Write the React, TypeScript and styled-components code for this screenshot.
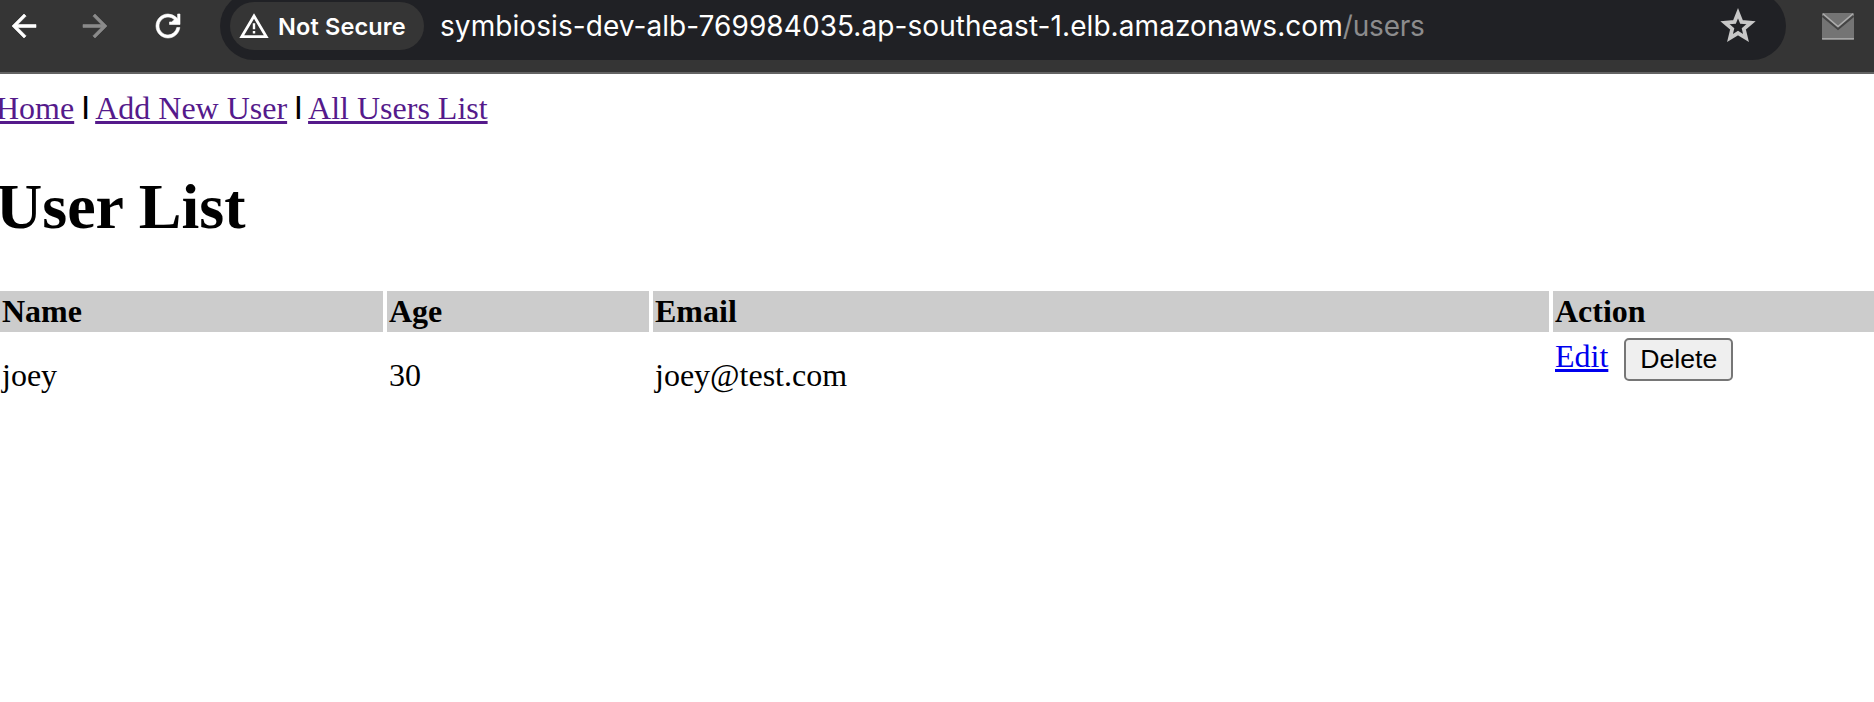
import React from 'react';
import styled, { createGlobalStyle } from 'styled-components';

const GlobalStyle = createGlobalStyle`
  body {
    margin: 0;
    background: #fff;
    color: #000;
    font-family: "Liberation Serif", "Times New Roman", serif;
    font-size: 32px;
    line-height: 37px;
    overflow: hidden;
  }
`;

const Toolbar = styled.header`
  display: flex;
  box-sizing: border-box;
  height: 74px;
  padding-left: 6px;
  background: #353535;
  border-bottom: 2px solid #636363;
  overflow: hidden;
`;

const IconSlot = styled.span<{ $color: string; $width: number }>`
  flex: none;
  width: ${(p) => p.$width}px;
  height: 52px;
  display: flex;
  align-items: center;
  color: ${(p) => p.$color};
`;

const AddressBar = styled.div`
  flex: none;
  box-sizing: border-box;
  display: flex;
  align-items: center;
  width: 1566px;
  height: 68px;
  margin-top: -8px;
  padding: 0 30px 0 10px;
  border-radius: 34px;
  background: #202125;
  font-family: Inter, "Liberation Sans", sans-serif;
`;

const SecurityChip = styled.div`
  box-sizing: border-box;
  display: flex;
  align-items: center;
  width: 194px;
  height: 48px;
  padding-left: 9px;
  gap: 9px;
  border-radius: 24px;
  background: #353535;
  color: #fff;
  font-size: 23.5px;
  font-weight: 560;
  letter-spacing: 0.15px;
  white-space: nowrap;
`;

const Url = styled.div`
  flex: 1;
  margin-left: 16px;
  color: #fff;
  font-size: 28px;
  font-weight: 430;
  letter-spacing: 0.07px;
  white-space: nowrap;
`;

const UrlPath = styled.span`
  color: #8c8c8d;
  letter-spacing: -0.2px;
`;

const MailSlot = styled.span`
  display: flex;
  align-items: center;
  height: 53px;
  margin-left: 36px;
`;

const Page = styled.main`
  margin-left: -4px;
  padding-top: 16px;
`;

const Nav = styled.nav`
  height: 37px;
`;

const Link = styled.a<{ $visited?: boolean }>`
  color: ${(p) => (p.$visited ? '#551a8b' : '#0000ee')};
  text-decoration: underline;
  text-decoration-thickness: 3px;
  text-underline-offset: 2px;
  text-decoration-skip-ink: none;
`;

const Divider = styled.span`
  font: bold 24px/1 "Liberation Sans", Arial, sans-serif;
  vertical-align: 5px;
`;

const Title = styled.h1`
  margin: 43px 0;
  font-size: 64px;
  line-height: 74px;
`;

const Table = styled.table`
  width: 1882px;
  table-layout: fixed;
  border-collapse: separate;
  border-spacing: 4px;
`;

const HeadCell = styled.th<{ $width?: number }>`
  box-sizing: border-box;
  width: ${(p) => (p.$width ? `${p.$width}px` : 'auto')};
  padding: 2px;
  background: #ccc;
  text-align: left;
`;

const Cell = styled.td`
  padding: 2px;
`;

const ActionForm = styled.form`
  display: flex;
  align-items: flex-start;
  gap: 16px;
  margin: 0 0 32px;
`;

const DeleteButton = styled.button`
  box-sizing: border-box;
  width: 109px;
  height: 43px;
  padding: 0;
  border: 2px solid #767676;
  border-radius: 5px;
  background: #efefef;
  color: #000;
  font: 26.67px/37px "Liberation Sans", Arial, sans-serif;
`;

const users = [{ name: 'joey', age: 30, email: 'joey@test.com' }];

const ToolbarIcon = ({ d }: { d: string }) => (
  <svg width="36" height="36" viewBox="0 0 24 24" fill="currentColor" stroke="currentColor" strokeWidth="0.4">
    <path d={d} />
  </svg>
);

const StarIcon = () => (
  <svg width="36" height="36" viewBox="0 0 36 36" fill="none" overflow="visible">
    <path
      d="M18 5.2 21.5 13.9 31 14.7 23.8 20.9 26 30 18 25.1 10 30 12.2 20.9 5 14.7 14.5 13.9Z"
      stroke="currentColor"
      strokeWidth="3.8"
    />
  </svg>
);

const WarningIcon = () => (
  <svg width="30" height="26" viewBox="0 0 30 26" fill="none">
    <path d="M15 3 27.2 23.6H2.8Z" stroke="#fff" strokeWidth="2.8" />
    <path d="M15 10.3v6M15 18v2.6" stroke="#fff" strokeWidth="2.4" />
  </svg>
);

const MailIcon = () => (
  <svg width="32" height="27" viewBox="0 0 32 27">
    <rect width="32" height="27" rx="1" fill="#747474" />
    <path d="M0 25.7h32" stroke="#a5a5a5" strokeWidth="1.4" />
    <path d="M0.5 3 16 16 31.5 3" fill="none" stroke="#444" strokeWidth="2" />
    <path d="M1 0.8 16 13.6 31 0.8" fill="none" stroke="#adadad" strokeWidth="1.5" />
  </svg>
);

export default function App() {
  return (
    <>
      <GlobalStyle />
      <Toolbar>
        <IconSlot $color="#fff" $width={71}>
          <ToolbarIcon d="M20 11H7.83l5.59-5.59L12 4l-8 8 8 8 1.41-1.41L7.83 13H20v-2z" />
        </IconSlot>
        <IconSlot $color="#8a8a8a" $width={73}>
          <ToolbarIcon d="M12 4l-1.41 1.41L16.17 11H4v2h12.17l-5.58 5.59L12 20l8-8z" />
        </IconSlot>
        <IconSlot $color="#fff" $width={70}>
          <ToolbarIcon d="M17.65 6.35A7.958 7.958 0 0 0 12 4c-4.42 0-7.99 3.58-7.99 8s3.57 8 7.99 8c3.9 0 7.3-2.8 7.9-7h-2.05A5.99 5.99 0 0 1 12 18c-3.31 0-6-2.69-6-6s2.69-6 6-6c1.66 0 3.14.69 4.22 1.78L14.4 9.3H13V11h7V4h-1.6v3.1z" />
        </IconSlot>
        <AddressBar>
          <SecurityChip>
            <WarningIcon />
            Not Secure
          </SecurityChip>
          <Url>
            symbiosis-dev-alb-769984035.ap-southeast-1.elb.amazonaws.com<UrlPath>/users</UrlPath>
          </Url>
          <IconSlot $color="#c7c7c7" $width={36}>
            <StarIcon />
          </IconSlot>
        </AddressBar>
        <MailSlot>
          <MailIcon />
        </MailSlot>
      </Toolbar>
      <Page>
        <Nav>
          <Link $visited href="#">Home</Link> <Divider>|</Divider>{' '}
          <Link $visited href="#">Add New User</Link> <Divider>|</Divider>{' '}
          <Link $visited href="#">All Users List</Link>
        </Nav>
        <Title>User List</Title>
        <Table>
          <thead>
            <tr>
              <HeadCell $width={383}>Name</HeadCell>
              <HeadCell $width={262}>Age</HeadCell>
              <HeadCell $width={896}>Email</HeadCell>
              <HeadCell>Action</HeadCell>
            </tr>
          </thead>
          <tbody>
            {users.map((user) => (
              <tr key={user.email}>
                <Cell>{user.name}</Cell>
                <Cell>{user.age}</Cell>
                <Cell>{user.email}</Cell>
                <Cell>
                  <ActionForm>
                    <Link href="#">Edit</Link>
                    <DeleteButton type="button">Delete</DeleteButton>
                  </ActionForm>
                </Cell>
              </tr>
            ))}
          </tbody>
        </Table>
      </Page>
    </>
  );
}
